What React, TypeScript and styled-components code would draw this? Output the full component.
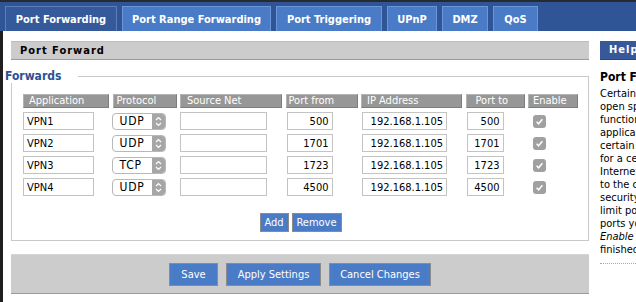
import React from "react";
import styled, { createGlobalStyle } from "styled-components";

const GlobalStyle = createGlobalStyle`
  html, body {
    margin: 0;
    padding: 0;
    overflow: hidden;
    background: #ffffff;
  }
  body {
    font-family: "DejaVu Sans Condensed", "Liberation Sans", sans-serif;
    font-size: 11px;
    color: #000;
  }
`;

const Page = styled.div`
  display: flex;
  flex-direction: column;
  min-height: 100vh;
`;

const TabBar = styled.div`
  display: flex;
  align-items: flex-end;
  gap: 5px;
  height: 29px;
  padding-left: 5px;
  background: #2f5597;
  border-top: 2px solid #262a31;
`;

const Tab = styled.div<{ $w: number; $active?: boolean }>`
  box-sizing: border-box;
  width: ${(p) => p.$w}px;
  height: 25px;
  display: flex;
  align-items: center;
  justify-content: center;
  background: ${(p) => (p.$active ? "#36599a" : "#4a7bc6")};
  border: 1px solid ${(p) => (p.$active ? "#5c7ebd" : "#6d96d8")};
  border-bottom: none;
  color: #ffffff;
  font-weight: bold;
  font-size: 11px;
  white-space: nowrap;
`;

const Content = styled.div`
  flex: 1;
  display: flex;
  gap: 11px;
  padding: 10px 0 0 8px;
  border-left: 3px solid #1f1f1f;
  background: #ffffff;
`;

const Main = styled.div`
  flex: 0 0 578px;
  display: flex;
  flex-direction: column;
`;

const SectionTitle = styled.div`
  box-sizing: border-box;
  height: 19px;
  padding-left: 9px;
  background: #cccccc;
  border-top: 1px solid #bdbdbd;
  border-bottom: 1px solid #9a9a9a;
  font-weight: bold;
  font-size: 11px;
  letter-spacing: 1px;
  line-height: 17px;
  color: #000;
`;

const Fieldset = styled.div`
  margin-top: 16px;
  border: 1px solid #c9c9c9;
  padding: 0 10px 8px 11px;
`;

const Legend = styled.div`
  width: fit-content;
  margin: -7px 0 0 -18px;
  padding-right: 17px;
  background: #ffffff;
  color: #2c5094;
  font-weight: bold;
  font-size: 12px;
  line-height: 13px;
`;

const Grid = styled.div`
  margin-top: 11px;
  display: grid;
  grid-template-columns: 86px 64px 102px 72px 101px 59px 50px;
  grid-template-rows: 14px;
  grid-auto-rows: 18px;
  column-gap: 3.5px;
  row-gap: 4px;
  align-items: center;
`;

const HeaderCell = styled.div<{ $pad: number }>`
  box-sizing: border-box;
  height: 14px;
  padding-left: ${(p) => p.$pad}px;
  background: #979797;
  border: 1px solid;
  border-color: #b4b4b4 #7d7d7d #7d7d7d #b4b4b4;
  color: #ffffff;
  font-size: 11px;
  line-height: 12px;
  white-space: nowrap;
  overflow: hidden;
`;

const TextInput = styled.input<{ $w: number; $right?: boolean }>`
  box-sizing: border-box;
  width: ${(p) => p.$w}px;
  height: 18px;
  margin: 0 0 0 ${(p) => (p.$right ? 1 : 0)}px;
  padding: 0 3px;
  border: 1px solid #c3c3c3;
  background: #ffffff;
  font-family: inherit;
  font-size: 11px;
  color: #000;
  text-align: ${(p) => (p.$right ? "right" : "left")};
  outline: none;
`;

const SelectBox = styled.div`
  box-sizing: border-box;
  width: 54px;
  height: 17px;
  margin-left: -1px;
  display: flex;
  border: 1px solid #b8b8b8;
  border-radius: 4px;
  background: #ffffff;
  overflow: hidden;
`;

const SelectValue = styled.div`
  flex: 1;
  padding-left: 7px;
  font-size: 12px;
  letter-spacing: 0.8px;
  line-height: 15px;
  color: #000;
`;

const Stepper = styled.div`
  width: 13px;
  display: flex;
  align-items: center;
  justify-content: center;
  background: #a6a6a6;
`;

const CheckBox = styled.div`
  width: 13px;
  height: 13px;
  margin-left: 5px;
  border-radius: 3px;
  background: #a0a0a0;
  display: flex;
  align-items: center;
  justify-content: center;
`;

const ButtonRow = styled.div`
  display: flex;
  justify-content: center;
  gap: 3px;
  margin-top: 17px;
`;

const SmallButton = styled.button<{ $w: number }>`
  box-sizing: border-box;
  width: ${(p) => p.$w}px;
  height: 19px;
  padding: 0;
  background: #4a7bc6;
  border: 1px solid #8b8b8b;
  color: #ffffff;
  font-family: inherit;
  font-size: 11px;
  cursor: pointer;
`;

const ActionBar = styled.div`
  box-sizing: border-box;
  margin-top: 13px;
  height: 40px;
  display: flex;
  align-items: center;
  justify-content: center;
  gap: 8px;
  background: #cccccc;
  border-top: 1px solid #d4d4d4;
  border-bottom: 1px solid #9a9a9a;
`;

const BigButton = styled.button<{ $w: number }>`
  box-sizing: border-box;
  width: ${(p) => p.$w}px;
  height: 23px;
  padding: 0;
  background: #4a7bc6;
  border: 1px solid #8b8b8b;
  color: #ffffff;
  font-family: inherit;
  font-size: 11px;
  cursor: pointer;
`;

const HelpCol = styled.div`
  flex: 0 0 220px;
  display: flex;
  flex-direction: column;
`;

const HelpTitle = styled.div`
  box-sizing: border-box;
  height: 19px;
  padding-left: 9px;
  background: #37599a;
  border-bottom: 1px solid #2a4578;
  color: #ffffff;
  font-weight: bold;
  font-size: 11px;
  letter-spacing: 1px;
  line-height: 18px;
`;

const HelpHeading = styled.div`
  margin-top: 11px;
  font-weight: bold;
  font-size: 12px;
  line-height: 13px;
  color: #000;
`;

const HelpText = styled.div`
  margin-top: 3px;
  padding-bottom: 7px;
  border-bottom: 1px dotted #a8a8a8;
  font-size: 11px;
  line-height: 13px;
  color: #000;
`;

const HelpLine = styled.div`
  white-space: nowrap;
`;

const Chevrons = () => (
  <svg width="9" height="13" viewBox="0 0 9 13">
    <path d="M2 5 L4.5 2.5 L7 5" fill="none" stroke="#fff" strokeWidth="1.2" />
    <path d="M2 8 L4.5 10.5 L7 8" fill="none" stroke="#fff" strokeWidth="1.2" />
  </svg>
);

const Check = () => (
  <svg width="9" height="9" viewBox="0 0 9 9">
    <path d="M1.6 4.8 L3.6 6.8 L7.4 2.2" fill="none" stroke="#fff" strokeWidth="1.5" />
  </svg>
);

const tabs = [
  { label: "Port Forwarding", w: 112, active: true },
  { label: "Port Range Forwarding", w: 149 },
  { label: "Port Triggering", w: 106 },
  { label: "UPnP", w: 50 },
  { label: "DMZ", w: 46 },
  { label: "QoS", w: 45 },
];

const headers = [
  { label: "Application", pad: 5 },
  { label: "Protocol", pad: 3 },
  { label: "Source Net", pad: 6 },
  { label: "Port from", pad: 2 },
  { label: "IP Address", pad: 5 },
  { label: "Port to", pad: 9 },
  { label: "Enable", pad: 4 },
];

const rows = [
  { app: "VPN1", proto: "UDP", from: "500", ip: "192.168.1.105", to: "500" },
  { app: "VPN2", proto: "UDP", from: "1701", ip: "192.168.1.105", to: "1701" },
  { app: "VPN3", proto: "TCP", from: "1723", ip: "192.168.1.105", to: "1723" },
  { app: "VPN4", proto: "UDP", from: "4500", ip: "192.168.1.105", to: "4500" },
];

const helpLines = [
  "Certain applications may require to",
  "open specific ports in order for it to",
  "function correctly. Examples of these",
  "applications include servers and",
  "certain online games. When a request",
  "for a certain port comes in from the",
  "Internet, the router will route the data",
  "to the computer you specify. Due to",
  "security concerns, you may want to",
  "limit port forwarding to only those",
  "ports you are using, and uncheck the",
];

export default function App() {
  return (
    <>
      <GlobalStyle />
      <Page>
        <TabBar>
          {tabs.map((t) => (
            <Tab key={t.label} $w={t.w} $active={t.active}>
              {t.label}
            </Tab>
          ))}
        </TabBar>
        <Content>
          <Main>
            <SectionTitle>Port Forward</SectionTitle>
            <Fieldset>
              <Legend>Forwards</Legend>
              <Grid>
                {headers.map((h) => (
                  <HeaderCell key={h.label} $pad={h.pad}>
                    {h.label}
                  </HeaderCell>
                ))}
                {rows.map((r) => (
                  <React.Fragment key={r.app}>
                    <TextInput $w={71} value={r.app} readOnly />
                    <SelectBox>
                      <SelectValue>{r.proto}</SelectValue>
                      <Stepper>
                        <Chevrons />
                      </Stepper>
                    </SelectBox>
                    <TextInput $w={87} value="" readOnly />
                    <TextInput $w={46} $right value={r.from} readOnly />
                    <TextInput $w={85} $right value={r.ip} readOnly />
                    <TextInput $w={37} $right value={r.to} readOnly />
                    <CheckBox>
                      <Check />
                    </CheckBox>
                  </React.Fragment>
                ))}
              </Grid>
              <ButtonRow>
                <SmallButton $w={29}>Add</SmallButton>
                <SmallButton $w={50}>Remove</SmallButton>
              </ButtonRow>
            </Fieldset>
            <ActionBar>
              <BigButton $w={49}>Save</BigButton>
              <BigButton $w={95}>Apply Settings</BigButton>
              <BigButton $w={102}>Cancel Changes</BigButton>
            </ActionBar>
          </Main>
          <HelpCol>
            <HelpTitle>Help</HelpTitle>
            <HelpHeading>Port Forwarding</HelpHeading>
            <HelpText>
              {helpLines.map((l) => (
                <HelpLine key={l}>{l}</HelpLine>
              ))}
              <HelpLine>
                <em>Enable</em> checkbox after you are
              </HelpLine>
              <HelpLine>finished.</HelpLine>
            </HelpText>
          </HelpCol>
        </Content>
      </Page>
    </>
  );
}
